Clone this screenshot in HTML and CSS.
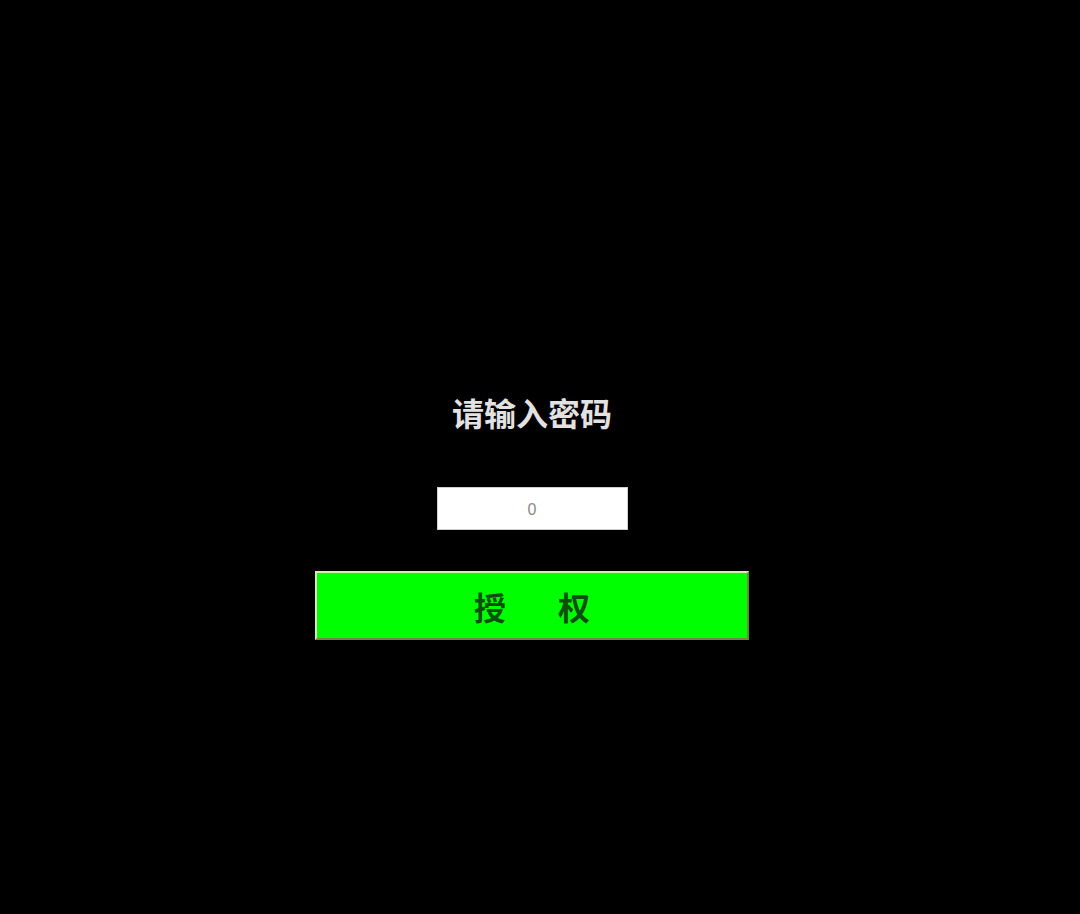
FILE: index.html
```html
<!DOCTYPE html>
<html lang="zh-CN">
<head>
<meta charset="utf-8">
<title>请输入密码</title>
<link rel="stylesheet" href="styles.css">
</head>
<body>
<main class="screen">
  <h1 class="title">请输入密码</h1>
  <div class="field"><span class="value">0</span></div>
  <button class="auth" type="button"><span>授</span><span>权</span></button>
</main>
</body>
</html>
```
FILE: styles.css
```css
html, body {
  margin: 0;
  padding: 0;
  background: #000;
  height: 100%;
}
.screen {
  display: flex;
  flex-direction: column;
  align-items: center;
  padding-top: 396px;
  padding-right: 16px;
  box-sizing: border-box;
  height: 914px;
}
.title {
  margin: 0;
  font-family: "Noto Sans CJK SC", "Liberation Sans", sans-serif;
  font-size: 32px;
  line-height: 32px;
  font-weight: 600;
  color: #e2e2e2;
  letter-spacing: 0;
}
.field {
  margin-top: 59px;
  width: 191px;
  height: 43px;
  box-sizing: border-box;
  background: #fff;
  border: 1px solid #cfcfcf;
  display: flex;
  align-items: center;
  justify-content: center;
}
.value {
  font-family: "Liberation Sans", sans-serif;
  font-size: 16px;
  color: #8a8a8a;
  padding-top: 2px;
}
.auth {
  margin-top: 41px;
  width: 434px;
  height: 69px;
  box-sizing: border-box;
  background: #00ff00;
  border: 2px solid;
  border-color: #d2f0a8 #5f8f35 #6d8a3e #d8f0b0;
  display: flex;
  align-items: center;
  justify-content: center;
  gap: 52px;
  padding: 0;
  font-family: "Noto Sans CJK SC", "Liberation Sans", sans-serif;
  font-size: 32px;
  font-weight: 700;
  color: #0a4f0a;
  line-height: 1;
}
```
